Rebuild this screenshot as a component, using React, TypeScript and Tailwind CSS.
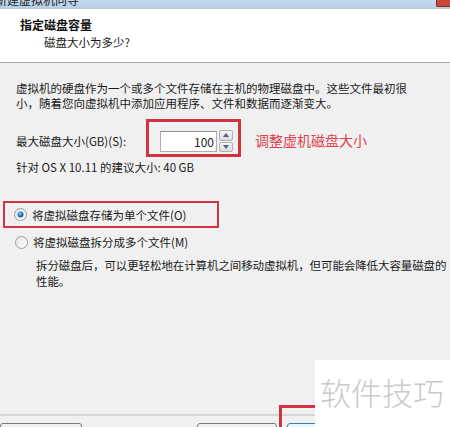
import React from "react";

const font = { fontFamily: "'Noto Sans CJK SC', 'Noto Sans', sans-serif" };

function Radio({ checked }: { checked?: boolean }) {
  return (
    <svg width="13" height="13" viewBox="0 0 13 13" className="shrink-0">
      <defs>
        <radialGradient id="rg" cx="0.4" cy="0.35" r="0.7">
          <stop offset="0" stopColor="#9fd4f5" />
          <stop offset="0.5" stopColor="#2a7bc4" />
          <stop offset="1" stopColor="#0d4d8a" />
        </radialGradient>
        <linearGradient id="rb" x1="0" y1="0" x2="1" y2="1">
          <stop offset="0" stopColor="#e4e4e4" />
          <stop offset="1" stopColor="#ffffff" />
        </linearGradient>
      </defs>
      <circle cx="6.5" cy="6.5" r="6" fill="url(#rb)" stroke="#9a9a9a" strokeWidth="1" />
      {checked && <circle cx="6.5" cy="6.5" r="3" fill="url(#rg)" />}
    </svg>
  );
}

export default function App() {
  return (
    <div
      className="relative w-[450px] h-[427px] overflow-hidden bg-[#f0f0f0] flex flex-col text-[#1a1a1a]"
      style={font}
    >
      {/* title bar */}
      <div className="h-[9px] shrink-0 overflow-hidden bg-gradient-to-b from-[#c4d9ee] to-[#b4cde6] relative">
        <div className="-mt-[8px] -ml-[5px] text-[12px] leading-[16px] text-[#222] whitespace-nowrap">新建虚拟机向导</div>
        <div className="absolute right-0 top-0 w-[14px] h-[7px] bg-[#c8483a] border-l border-b border-[#8a2a20] rounded-bl-[2px]" />
      </div>

      {/* header */}
      <div className="h-[54px] shrink-0 bg-white border-b border-[#a6a6a6] pt-[8px]">
        <div className="pl-[20px] text-[12px] leading-[15px] font-bold text-[#111]">指定磁盘容量</div>
        <div className="pl-[44px] mt-[3px] text-[11.5px] leading-[15px]">磁盘大小为多少?</div>
      </div>

      {/* body */}
      <div className="flex-1 px-[16px] text-[11.5px]">
        <div className="mt-[18px] leading-[15px] whitespace-nowrap">
          <div>虚拟机的硬盘作为一个或多个文件存储在主机的物理磁盘中。这些文件最初很</div>
          <div>小，随着您向虚拟机中添加应用程序、文件和数据而逐渐变大。</div>
        </div>

        <div className="mt-[8px] flex items-start">
          <div className="w-[130px] mt-[15px] leading-[14px] whitespace-nowrap">最大磁盘大小(GB)(S):</div>
          <div className="border-[3px] border-[#d33340] w-[95px] h-[38px] pl-[11px] pt-[9px] flex items-start gap-[2px]">
            <div className="w-[57px] h-[21px] bg-white border border-[#abadb3] border-t-[#8e8f8f] flex items-center justify-end pr-[2px] text-[12px]">
              100
            </div>
            <div className="w-[14px] h-[22px] flex flex-col gap-[1px] -mt-[1px]">
              <div className="flex-1 bg-gradient-to-b from-[#f6f6f6] to-[#dcdcdc] border border-[#b0b0b0] rounded-[2px] flex items-center justify-center">
                <svg width="6" height="4" viewBox="0 0 6 4"><path d="M0 4 L3 0 L6 4 Z" fill="#4d6185" /></svg>
              </div>
              <div className="flex-1 bg-gradient-to-b from-[#f6f6f6] to-[#dcdcdc] border border-[#b0b0b0] rounded-[2px] flex items-center justify-center">
                <svg width="6" height="4" viewBox="0 0 6 4"><path d="M0 0 L3 4 L6 0 Z" fill="#4d6185" /></svg>
              </div>
            </div>
          </div>
          <div className="ml-[14px] mt-[13px] text-[14px] leading-[16px] text-[#e0404e] whitespace-nowrap">调整虚机磁盘大小</div>
        </div>

        <div className="mt-[3px] leading-[14px] whitespace-nowrap">针对 OS X 10.11 的建议大小: 40 GB</div>

        <div className="mt-[27px] -ml-[13px] w-[216px] h-[27px] border-2 border-[#d33340] flex items-center pl-[9px] gap-[5px]">
          <Radio checked />
          <span className="leading-[16px] whitespace-nowrap">将虚拟磁盘存储为单个文件(O)</span>
        </div>

        <div className="mt-[6px] h-[16px] flex items-center -ml-[1px] gap-[5px]">
          <Radio />
          <span className="leading-[16px] whitespace-nowrap">将虚拟磁盘拆分成多个文件(M)</span>
        </div>

        <div className="mt-[7px] ml-[20px] leading-[16px] whitespace-nowrap tracking-[-0.1px]">
          <div>拆分磁盘后，可以更轻松地在计算机之间移动虚拟机，但可能会降低大容量磁盘的</div>
          <div>性能。</div>
        </div>
      </div>

      {/* footer */}
      <div className="h-[13px] shrink-0 border-t-2 border-[#d6d6d6] flex items-start pt-[7px] overflow-hidden">
        <div className="w-[82px] h-[23px] shrink-0 rounded-[3px] border border-[#7a7a7a] bg-gradient-to-b from-[#f2f2f2] to-[#e0e0e0]" />
        <div className="ml-[115px] w-[80px] h-[23px] shrink-0 rounded-[3px] border border-[#7a7a7a] bg-gradient-to-b from-[#f2f2f2] to-[#e0e0e0]" />
        <div className="ml-[10px] w-[80px] h-[23px] shrink-0 rounded-[3px] border border-[#3c7fb1] bg-gradient-to-b from-[#eaf6fd] to-[#c8e6f8]" />
      </div>

      {/* red annotation around next button */}
      <div className="absolute left-[279px] top-[405px] w-[80px] h-[30px] border-[3px] border-[#d33340]" />

      {/* watermark */}
      <div className="absolute left-[315px] top-[360px] w-[135px] h-[67px] bg-white flex items-start pl-[5px] pt-[14px]">
        <span className="text-[31px] leading-[36px] text-[#cacaca] font-light whitespace-nowrap">软件技巧</span>
      </div>
    </div>
  );
}
